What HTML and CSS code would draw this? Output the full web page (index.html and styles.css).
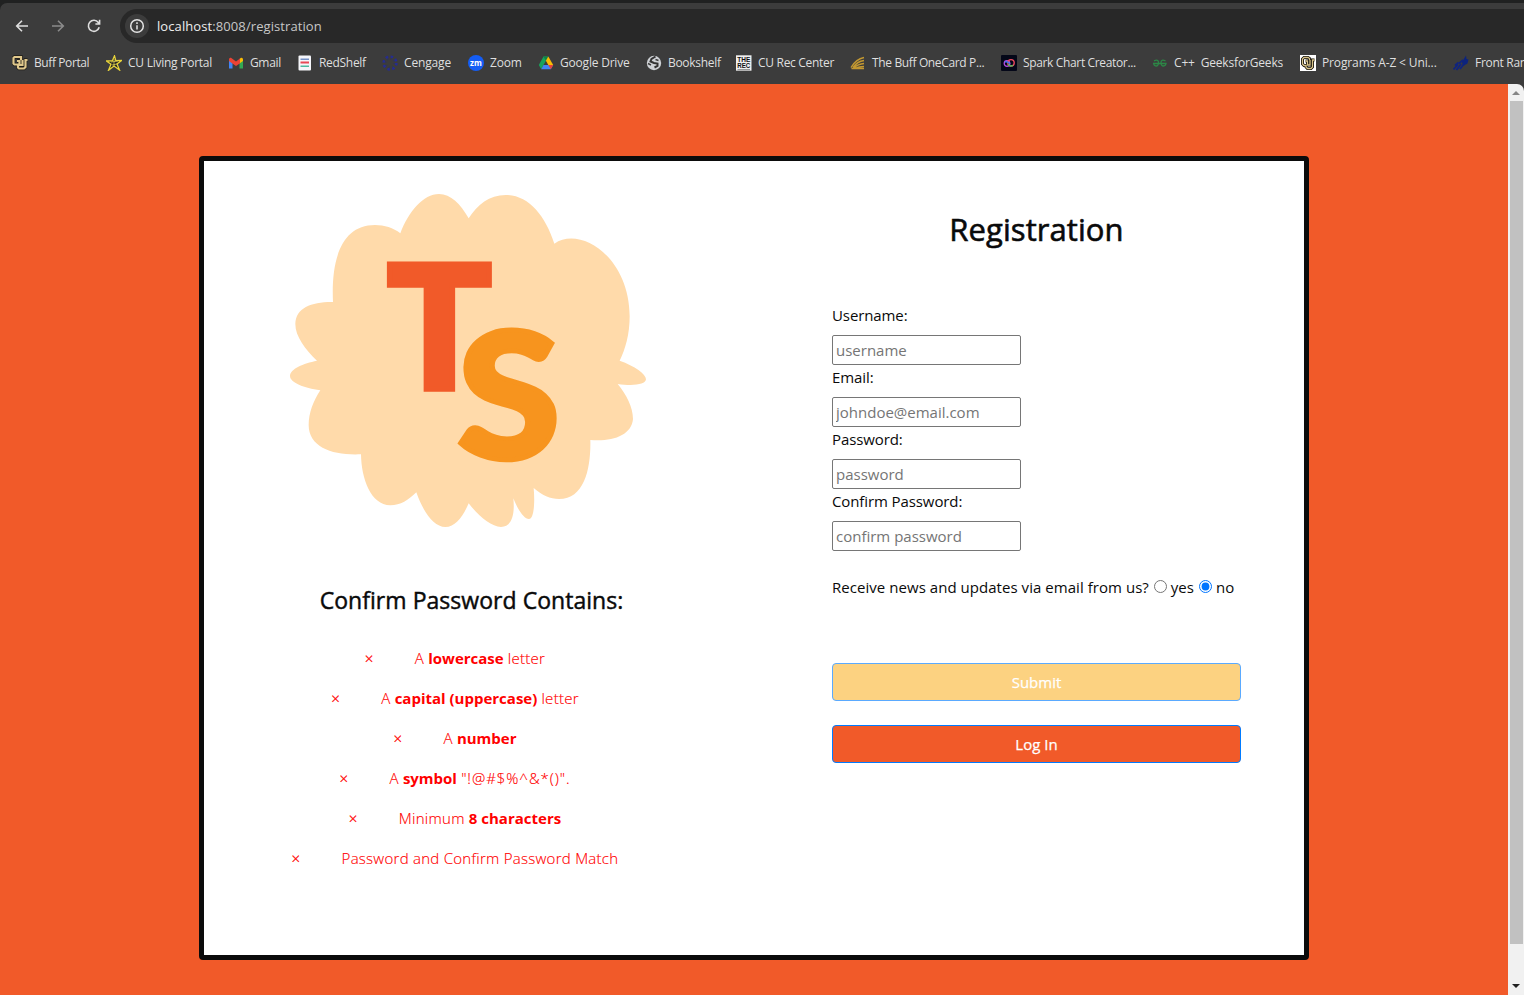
FILE: index.html
```html
<!DOCTYPE html>
<html lang="en">
<head>
<meta charset="utf-8">
<title>Registration</title>
<link rel="stylesheet" href="styles.css">
</head>
<body>
<header class="browser">
  <div class="toolbar">
    <svg class="nav" viewBox="0 0 16 16"><path d="M14 8H3M8 2.700L2.700 8L8 13.300" /></svg>
    <svg class="nav dim" viewBox="0 0 16 16"><path d="M2 8H13M8 2.700L13.300 8L8 13.300" /></svg>
    <svg class="nav" viewBox="0 0 16 16"><path d="M13.200 9.300A5.500 5.500 0 1 1 12.300 4.500L13.300 5.600M13.600 1.800V6H9.400" /></svg>
    <div class="address">
      <span class="info"><svg viewBox="0 0 16 16"><circle cx="8" cy="8" r="6.300"/><path d="M8 7.200V11.500M8 4.300V6"/></svg></span>
      <span class="url"><span class="host">localhost</span>:8008/registration</span>
    </div>
  </div>
  <nav class="bookmarks">
    <a class="mark"><svg viewBox="0 0 16 16"><path d="M9 5V2H2.500L1.500 3V8.500L2.500 9.500H6V12.500L7 13.500H12L13.500 12V5H15.500M10.500 5V10H7.500V6H5" fill="none" stroke="#1c1a15" stroke-width="3.400"/><path d="M9 5V2H2.500L1.500 3V8.500L2.500 9.500H6V12.500L7 13.500H12L13.500 12V5H15.500M10.500 5V10H7.500V6H5" fill="none" stroke="#e0c88c" stroke-width="2.200"/></svg><span>Buff Portal</span></a>
    <a class="mark"><svg viewBox="0 0 16 16"><path d="M8.500 .8L9.800 5.700L15.500 5.500L11 9L13.500 15L8 11L2.500 15.300L5 9.200L.5 6L6.300 5.900Z" fill="#252525" stroke="#e8d43a" stroke-width="1.300"/><path d="M8 4L8 11M5 7L12 6M6 10L11 9" stroke="#d5c850" stroke-width=".8"/></svg><span>CU Living Portal</span></a>
    <a class="mark"><svg viewBox="0 0 16 16"><path d="M1 4V13.500H4.500V7Z" fill="#4285f4"/><path d="M15 4V13.500H11.500V7Z" fill="#34a853"/><path d="M11.500 4L13 2.800Q15 2.500 15 4.500V6L11.500 8.500Z" fill="#fbbc04"/><path d="M1 6V4.500Q1 2.300 3 2.800L8 6.500L12 3.500V8.200L8 11L4 8.200Z" fill="#ea4335"/></svg><span>Gmail</span></a>
    <a class="mark"><svg viewBox="0 0 16 16"><rect x="1.500" y=".5" width="12.500" height="15" rx="1" fill="#f5f6fa"/><path d="M3.500 4.200H12" stroke="#5477b8" stroke-width="1.200"/><path d="M3.500 7.500H12" stroke="#e84855" stroke-width="2"/><path d="M3.500 11.200H12" stroke="#25aa87" stroke-width="1.200"/></svg><span>RedShelf</span></a>
    <a class="mark"><svg viewBox="0 0 16 16"><circle cx="8" cy="8" r="6.400" fill="none" stroke="#252c91" stroke-width="2.500" stroke-dasharray="2.500 2.500"/><circle cx="8" cy="8" r="4.200" fill="none" stroke="#252c75" stroke-width="1" stroke-dasharray="1 2.300"/></svg><span>Cengage</span></a>
    <a class="mark"><svg viewBox="0 0 16 16"><circle cx="8" cy="8" r="8" fill="#145df5"/><text x="8" y="10.600" class="zm">zm</text></svg><span>Zoom</span></a>
    <a class="mark"><svg viewBox="0 0 16 16"><path d="M5.500 1.500H10.300L3.200 14.200L.8 10Z" fill="#18a35c"/><path d="M5.500 1.500H10.300L7.900 5.700Z" fill="#118244"/><path d="M10.300 1.500L15.200 10H10.300L7.900 5.700Z" fill="#fbbc04"/><path d="M5.500 10H15.200L12.800 14.200H3.200Z" fill="#4285f4"/><path d="M10.300 10H15.200L12.800 14.200Z" fill="#ea4335"/></svg><span>Google Drive</span></a>
    <a class="mark"><svg viewBox="0 0 16 16"><circle cx="8" cy="8" r="7.200" fill="#ced1d5"/><path d="M9.500 1.500L5.500 4L4.500 6.500L8 8L11.500 8.500V11L8.500 12.500" fill="none" stroke="#333" stroke-width="2"/><path d="M2 8.500L5 10M9.500 4.500L12.500 5.500" stroke="#3c3c3c" stroke-width="1.400"/></svg><span>Bookshelf</span></a>
    <a class="mark"><svg viewBox="0 0 16 16"><path d="M0 .3H15.500V15.700H0Z" fill="#efefef"/><text x="7.800" y="7" textLength="13" lengthAdjust="spacingAndGlyphs" class="rec">THE</text><text x="7.800" y="13.200" textLength="13" lengthAdjust="spacingAndGlyphs" class="rec">REC</text><path d="M1.500 14.600H14" stroke="#666" stroke-width=".7"/></svg><span>CU Rec Center</span></a>
    <a class="mark"><svg viewBox="0 0 16 16"><path d="M1 12.500Q6 4 14 2.500M3 12.500Q7 6.500 14 5.500M4 13Q8 9 14 8.500M5 13.500Q9 11.500 14 11.500M1.500 13.500H14" fill="none" stroke="#c39831" stroke-width="1.400"/></svg><span>The Buff OneCard P...</span></a>
    <a class="mark"><svg viewBox="0 0 16 16"><rect width="16" height="16" rx="1" fill="#040718"/><circle cx="6" cy="8.500" r="2.800" fill="none" stroke="#b04be0" stroke-width="1.300"/><circle cx="10" cy="7.800" r="3.200" fill="none" stroke="#f04a5f" stroke-width="1.400"/><path d="M7 9.500Q9 12 12 10.300" fill="none" stroke="#4cbc5a" stroke-width="1.400"/><path d="M4 7Q7 6 9 9" fill="none" stroke="#3a7df3" stroke-width="1.300"/></svg><span>Spark Chart Creator...</span></a>
    <a class="mark"><svg viewBox="0 0 16 16"><path d="M2 5.800Q6.500 4 6.500 7.500Q6.500 11 4 11Q2 11 1.600 8.500H14Q13.600 11 11.500 11Q9 11 9 7.500Q9 4 13.500 5.800" fill="none" stroke="#2c8746" stroke-width="1.300"/></svg><span>C++&nbsp; GeeksforGeeks</span></a>
    <a class="mark"><svg viewBox="0 0 16 16"><path d="M0 0H16V16H0Z" fill="#fff"/><path d="M9.500 5V3.500L8 2.500H4L2.500 4V9L4 10.500H6V12L7.500 13.500H11L12.500 12V5H14.500M10 5V10H7.500V6H5.500" fill="none" stroke="#15120b" stroke-width="3"/><path d="M9.500 5V3.500L8 2.500H4L2.500 4V9L4 10.500H6V12L7.500 13.500H11L12.500 12V5H14.500M10 5V10H7.500V6H5.500" fill="none" stroke="#d8c48a" stroke-width="1.300"/></svg><span>Programs A-Z &lt; Uni...</span></a>
    <a class="mark"><svg viewBox="0 0 16 16"><path d="M.5 14.500L5 9.500M3.500 15L8 9M7 14L11 9M2 10.500L5.500 7.500M6 8.500L10 5" stroke="#10247f" stroke-width="1.800"/><path d="M9 7L13 .5L13.500 4L15.500 4.500L14.500 8.500L10 11Z" fill="#0c237e"/></svg><span>Front Range</span></a>
  </nav>
</header>
<div class="viewport">
  <main class="page">
    <section class="card">
      <div class="left">
        <svg class="logo" viewBox="0 0 1140 1080">
          <path fill="#ffdaaa" d="M361 160C386 94 430 42 477 42C512 42 542 72 566 115C592 74 628 45 677 45C745 45 796 106 823 191C901 137 1048 230 1049 409C1049 463 1036 508 1019 542C1064 558 1098 582 1098 598C1097 615 1057 618 1013 612C1039 644 1059 681 1059 717C1055 766 997 786 931 780C933 861 915 957 837 957C811 957 786 946 761 924C765 967 762 1017 747 1017C731 1017 712 986 700 955C704 994 700 1040 663 1041C633 1040 594 1006 566 970C549 1009 527 1041 496 1041C461 1041 428 993 409 937C385 960 362 976 331 976C272 975 244 896 243 823C161 827 86 803 86 735C86 699 100 663 121 631C72 624 30 608 30 588C30 567 70 550 111 542C76 509 46 469 46 432C47 383 96 365 159 366C153 239 184 135 285 135C313 135 340 143 361 160Z"/>
          <text class="t" x="321" y="628" textLength="314" lengthAdjust="spacingAndGlyphs">T</text>
          <text class="s" x="531" y="836" textLength="310" lengthAdjust="spacingAndGlyphs">S</text>
        </svg>
        <h2 class="subtitle">Confirm Password Contains:</h2>
        <ul class="rules">
          <li><i>×</i><span>A <b>lowercase</b> letter</span></li>
          <li><i>×</i><span>A <b>capital (uppercase)</b> letter</span></li>
          <li><i>×</i><span>A <b>number</b></span></li>
          <li><i>×</i><span>A <b>symbol</b> <span class="symbols">"!@#$%^&amp;*()".</span></span></li>
          <li><i>×</i><span>Minimum <b>8 characters</b></span></li>
          <li><i>×</i><span>Password and Confirm Password Match</span></li>
        </ul>
      </div>
      <form class="form">
        <h1 class="title">Registration</h1>
        <label>Username:</label><input type="text" placeholder="username">
        <label>Email:</label><input type="text" placeholder="johndoe@email.com">
        <label>Password:</label><input type="password" placeholder="password">
        <label>Confirm Password:</label><input type="password" placeholder="confirm password">
        <div class="news"><span class="question">Receive news and updates via email from us?</span><input type="radio" name="news"><span class="yes">yes</span><input type="radio" name="news" checked><span>no</span></div>
        <button type="button" class="submit">Submit</button>
        <button type="button" class="login">Log In</button>
      </form>
    </section>
  </main>
  <aside class="scroll">
    <svg viewBox="0 0 16 17"><path d="M4 11H12L8 7Z" fill="#858585"/></svg>
    <div class="thumb"></div>
    <svg class="down" viewBox="0 0 16 17"><path d="M4 6H12L8 10Z" fill="#202020"/></svg>
  </aside>
</div>
</body>
</html>
```
FILE: styles.css
```css
* { box-sizing: border-box; }
body { margin: 0; width: 1524px; height: 995px; overflow: hidden; background: #3c3c3c; font-family: "Open Sans", "Noto Sans", sans-serif; font-size: 15px; color: #0a0a0a; }
.browser { height: 84px; padding-top: 3px; background: #202121; }
.toolbar { height: 40px; padding: 6px 0 0 14px; display: flex; background: #3c3c3c; border-top-left-radius: 7px; }
.nav { width: 16px; height: 16px; margin: 9px 20px 0 0; fill: none; stroke: #dedede; stroke-width: 1.600; flex: none; }
.nav.dim { stroke: #8b8b8b; }
.address { flex: 1; height: 34px; margin-left: -2px; background: #282828; border-radius: 17px 0 0 17px; display: flex; align-items: center; }
.info { width: 24px; height: 24px; margin-left: 5px; border-radius: 50%; background: #3c3c3c; display: grid; place-items: center; }
.info svg { width: 16px; height: 16px; fill: none; stroke: #e3e3e3; stroke-width: 1.500; }
.url { margin-left: 8px; font-size: 13px; line-height: 32px; color: #c7c7c7; letter-spacing: .09px; }
.host { color: #eee; }
.bookmarks { height: 41px; padding: 11px 0 0 12px; display: flex; background: #3c3c3c; overflow: hidden; }
.mark { display: flex; flex: none; height: 18px; align-items: center; gap: 6px; color: #dfdfdf; font-size: 12px; line-height: 18px; white-space: nowrap; letter-spacing: -.3px; }
.mark svg { width: 16px; height: 16px; flex: none; letter-spacing: 0; }
.zm { font: bold 8px "Open Sans", sans-serif; fill: #fff; text-anchor: middle; }
.rec { font: bold 7px "Liberation Sans", sans-serif; fill: #111; text-anchor: middle; }
.mark:nth-child(1) { width: 94px; letter-spacing: -.4px; }
.mark:nth-child(2) { width: 122px; letter-spacing: -.25px; }
.mark:nth-child(3) { width: 69px; letter-spacing: -.35px; }
.mark:nth-child(4) { width: 85px; }
.mark:nth-child(5) { width: 86px; letter-spacing: -.15px; }
.mark:nth-child(6) { width: 70px; letter-spacing: -.15px; }
.mark:nth-child(7) { width: 108px; letter-spacing: -.2px; }
.mark:nth-child(8) { width: 90px; }
.mark:nth-child(9) { width: 114px; }
.mark:nth-child(10) { width: 151px; letter-spacing: -.36px; }
.mark:nth-child(11) { width: 151px; letter-spacing: -.35px; }
.mark:nth-child(12) { width: 148px; letter-spacing: -.17px; }
.mark:nth-child(13) { width: 153px; letter-spacing: -.13px; }
.viewport { display: flex; height: 911px; }
.page { width: 1508px; padding: 72px 0 0 199px; background: #f15a29; }
.card { width: 1110px; height: 804px; border: 5px solid #0b0b0b; border-radius: 4px; background: #fff; display: flex; }
.left { width: 535px; flex: none; }
.logo { display: block; width: 380px; height: 360px; margin: 19px 0 0 76px; }
.t { font: 900 514px Lato, sans-serif; fill: #f15a29; stroke: #f15a29; stroke-width: 16px; }
.s { font: 900 529px Lato, sans-serif; fill: #f7941e; stroke: #f7941e; stroke-width: 14px; }
.subtitle { margin: 41px 0 0; text-align: center; font-size: 23px; font-weight: 400; line-height: 38px; -webkit-text-stroke: .45px #0a0a0a; letter-spacing: .04px; }
.rules { list-style: none; margin: 19px 33px 0 0; padding: 0; color: #f00; font-weight: 300; letter-spacing: .27px; -webkit-text-stroke: .15px #f00; }
.rules b { font-weight: 700; letter-spacing: 0; -webkit-text-stroke: 0; }
.symbols { letter-spacing: .95px; }
.rules li { height: 40px; display: flex; justify-content: center; align-items: center; white-space: nowrap; }
.rules i { font-style: normal; font-size: 15px; width: 50px; -webkit-text-stroke: .3px #f00; }
.form { width: 409px; margin-left: 93px; display: flex; flex-direction: column; align-items: flex-start; }
.title { align-self: stretch; margin: 44px 0 51px; text-align: center; font-size: 31px; font-weight: 400; line-height: 48px; -webkit-text-stroke: .6px #0a0a0a; letter-spacing: .08px; }
.form label { height: 24px; line-height: 24px; margin-bottom: 8px; margin-top: -1px; letter-spacing: -.1px; }
.form input[type=text], .form input[type=password] { width: 189px; height: 30px; margin: 0 0 1px; padding: 1px 3px; border: 1px solid #767676; border-radius: 2px; background: #fff; font: 15px "Open Sans", sans-serif; }
.form input::placeholder { color: #757575; }
.news { display: flex; height: 24px; line-height: 24px; margin: 23px 0 64px; white-space: nowrap; }
.question { letter-spacing: .045px; }
.news input { width: 13px; height: 13px; margin: 5px 4px 0 5px; }
.form button { align-self: stretch; height: 38px; padding: 0; border: 1px solid #007bff; border-radius: 4px; background: #f15a29; color: #fff; font: 400 15px "Open Sans", sans-serif; -webkit-text-stroke: .25px #fff; }
.form .submit { border-color: #5aaaff; background: #fcd281; margin-bottom: 24px; }
.scroll { width: 16px; background: #f1f1f1; border-top-right-radius: 7px; }
.scroll svg { display: block; width: 16px; height: 17px; }
.thumb { width: 13px; height: 843px; margin-left: 2px; background: #c1c1c1; }
.scroll .down { margin-top: 34px; }
```
